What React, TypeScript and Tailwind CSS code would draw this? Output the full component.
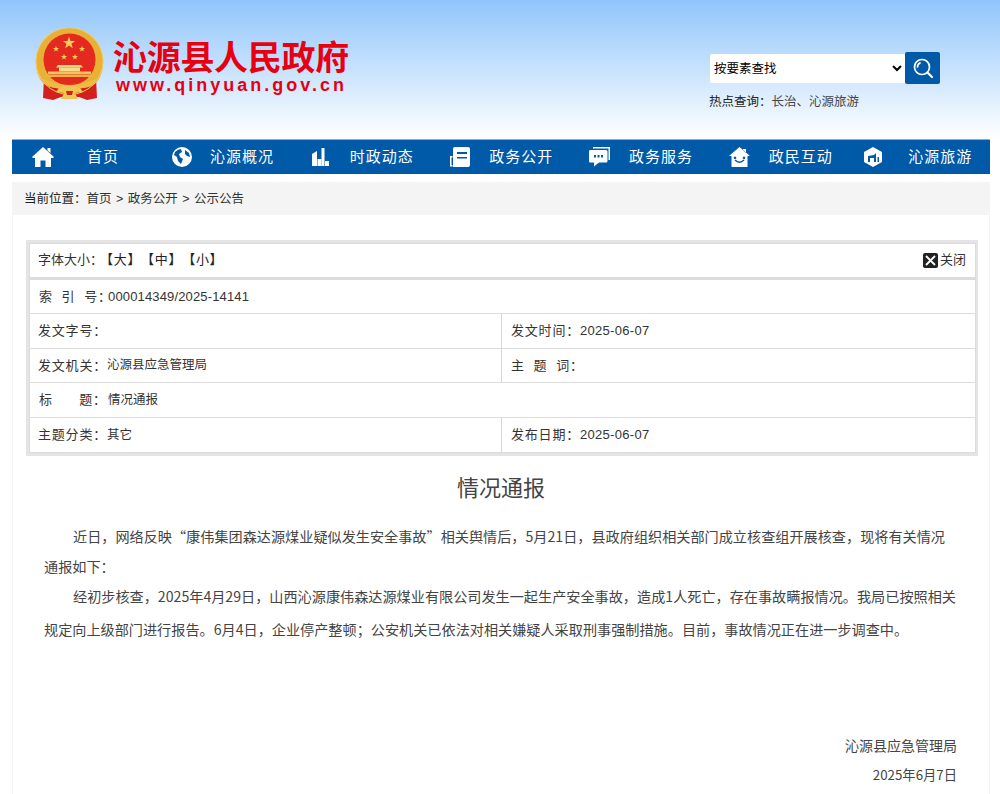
import { ReactNode } from 'react';

const SANS = "font-['Liberation_Sans','Noto_Sans_CJK_SC',sans-serif]";
const CJK = "font-['Noto_Sans_CJK_SC',sans-serif]";

function Star({ x, y, r }: { x: number; y: number; r: number }) {
  const pts: string[] = [];
  for (let i = 0; i < 10; i++) {
    const rad = i % 2 === 0 ? r : r * 0.4;
    const a = (Math.PI / 5) * i - Math.PI / 2;
    pts.push(`${(x + rad * Math.cos(a)).toFixed(2)},${(y + rad * Math.sin(a)).toFixed(2)}`);
  }
  return <polygon points={pts.join(' ')} fill="#f3cf5a" />;
}

function Emblem() {
  return (
    <svg width="70" height="74" viewBox="0 0 70 74">
      {/* ribbons */}
      <path d="M9 50 L8 70 L18 72 L26 69 L44 69 L52 72 L62 70 L61 50 Z" fill="#d4201c" />
      {/* ring */}
      <path d="M34.500 0 A34.500 34.500 0 0 1 64 51 Q60 58 50 60 H19 Q9 58 5 51 A34.500 34.500 0 0 1 34.500 0 Z" fill="#e8b136" />
      <circle cx="34.500" cy="33" r="33.500" fill="none" stroke="#f2cd62" strokeWidth="1" />
      <circle cx="34.500" cy="31.500" r="26" fill="#e42a1f" />
      <Star x={34} y={15} r={6.500} />
      <Star x={21} y={21} r={3.200} />
      <Star x={47} y={21} r={3.200} />
      <Star x={29} y={29} r={3.200} />
      <Star x={40} y={29} r={3.200} />
      {/* gate */}
      <path d="M23 37 H46 L48 39.500 H21 Z" fill="#f3d57c" />
      <rect x="24" y="39.500" width="21" height="4" fill="#f6dc8e" />
      <rect x="13" y="43.500" width="43" height="3" fill="#f0c65a" />
      <rect x="10" y="47" width="49" height="2" fill="#e9b53c" />
      {/* bottom garland */}
      <path d="M6 50 Q34 64 63 50 L60 56 Q34 67 9 56 Z" fill="#eebc44" />
      <path d="M24 60 Q34 54 45 60 L48 64 L40 65 L43 71 H26 L29 65 L21 64 Z" fill="#f0c552" />
      <path d="M31 63 H38 L37 67 H32 Z" fill="#d4201c" />
    </svg>
  );
}

function HomeIcon() {
  return (
    <svg width="22" height="20" viewBox="0 0 22 20" fill="#fff">
      <path d="M11 0 L22 10 L21 11 H19 V20 H13.500 V13.500 H8.500 V20 H3 V11 H1 L0 10 Z" />
      <path d="M15.500 1 H18.500 V6 L15.500 3.500 Z" />
    </svg>
  );
}

function GlobeIcon() {
  return (
    <svg width="20" height="20" viewBox="0 0 20 20">
      <circle cx="10" cy="10" r="10" fill="#fff" />
      <path d="M3 5 Q6 2 9 2 L10 5 L7 7 L8 10 L11 12 L9 17 L6 14 L5 10 L2 8 Z" fill="#005aa7" />
      <path d="M13 3 L17 6 L18 10 L15 9 L13 7 Z" fill="#005aa7" />
    </svg>
  );
}

function ChartIcon() {
  return (
    <svg width="17" height="18" viewBox="0 0 17 18" fill="#fff">
      <path d="M0 6 L5 3 V18 H0 Z" />
      <rect x="5.500" y="11" width="4" height="7" />
      <rect x="9.500" y="0" width="3" height="18" />
      <rect x="13" y="13" width="4" height="5" />
    </svg>
  );
}

function NewsIcon() {
  return (
    <svg width="20" height="20" viewBox="0 0 20 20" fill="#fff">
      <path d="M3 2 Q3 0 5 0 H18 Q20 0 20 2 V18 Q20 20 18 20 H3 Z M7 5 V7 H17 V5 Z M7 10 V11.500 H17 V10 Z" fillRule="evenodd" />
      <path d="M0 9 H2.500 V10.500 H1.500 V18 H2.500 V19.500 H0 Z" />
    </svg>
  );
}

function ChatIcon() {
  return (
    <svg width="21" height="20" viewBox="0 0 21 20" fill="#fff">
      <path d="M4 0 H21 V13 H19.500 V1.500 H4 Z" />
      <path d="M1 3 H17 Q18.500 3 18.500 4.500 V14 Q18.500 15.500 17 15.500 H10 L5 19.500 V15.500 H1 Q0 15.500 0 14 V4.500 Q0 3 1 3 Z M5 8 V10.500 H7 V8 Z M8.500 8 V10.500 H10.500 V8 Z M12 8 V10.500 H14 V8 Z" fillRule="evenodd" />
    </svg>
  );
}

function SmileHomeIcon() {
  return (
    <svg width="21" height="20" viewBox="0 0 21 20" fill="#fff">
      <path d="M10.500 0 L21 9 H18.500 V20 H2.500 V9 H0 Z M14 2 H17 V6 L14 3.500 Z M6 9.500 A1.300 1.300 0 1 0 6.010 9.500 Z M15 9.500 A1.300 1.300 0 1 0 15.010 9.500 Z" fillRule="evenodd" />
      <path d="M6 13 Q10.500 17.500 15 13" fill="none" stroke="#005aa7" strokeWidth="1.400" />
    </svg>
  );
}

function CubeIcon() {
  return (
    <svg width="18" height="20" viewBox="0 0 18 20" fill="#fff">
      <path d="M9 0 L18 5 V15 L9 20 L0 15 V5 Z M4 9 V15 H6 V11 H10 V15 H12 V6 L10 8 Z M13.500 10 V15 H15 V10 Z" fillRule="evenodd" />
    </svg>
  );
}

const NAV: { label: string; icon: ReactNode; iconBox: string; text: string }[] = [
  { label: '首页', icon: <HomeIcon />, iconBox: 'w-[62px]', text: 'ml-[13px]' },
  { label: '沁源概况', icon: <GlobeIcon />, iconBox: 'w-[60px]', text: 'ml-[-2px]' },
  { label: '时政动态', icon: <ChartIcon />, iconBox: 'w-[58px]', text: 'ml-0' },
  { label: '政务公开', icon: <NewsIcon />, iconBox: 'w-[58px]', text: 'ml-0' },
  { label: '政务服务', icon: <ChatIcon />, iconBox: 'w-[58px]', text: 'ml-0' },
  { label: '政民互动', icon: <SmileHomeIcon />, iconBox: 'w-[57px]', text: 'ml-[1px]' },
  { label: '沁源旅游', icon: <CubeIcon />, iconBox: 'w-[46px]', text: 'ml-[12px]' },
];

function Cell({ label, value, wide, valueClass }: { label: ReactNode; value?: string; wide?: boolean; valueClass?: string }) {
  return (
    <div className={`flex items-center h-full ${wide ? 'w-[472px] border-r border-[#d8d8d8] pl-[8px]' : 'flex-1 pl-[9px]'}`}>
      <span className="inline-block w-[69px] text-[13px] tracking-[0.8px] whitespace-pre">{label}</span>
      {value && <span className={valueClass ?? 'text-[12.5px]'}>{value}</span>}
    </div>
  );
}

const DATE = 'text-[13px] tracking-[0.300px]';

export default function App() {
  return (
    <div className={`${SANS} h-[794px] overflow-hidden bg-white text-[#333]`}>
      {/* header */}
      <header className="flex h-[139px] justify-between bg-gradient-to-b from-[#90c5fa] to-white">
        <div className="ml-[35px] mt-[28px] flex items-start">
          <Emblem />
          <div className="ml-[8px] mt-[10px]">
            <div className="text-[34px] leading-[40px] font-bold tracking-[-0.300px] whitespace-nowrap text-[#e60012]">沁源县人民政府</div>
            <div className="-mt-[3px] ml-[3px] text-[18px] leading-[20px] font-bold tracking-[3px] text-[#e60012]">www.qinyuan.gov.cn</div>
          </div>
        </div>
        <div className="mr-[60px] mt-[52px] w-[230px]">
          <div className="flex items-center">
            <select className="h-[29px] w-[195px] rounded-l-[2px] bg-white pt-[2px] text-[12.500px] text-black outline-none">
              <option>按要素查找</option>
            </select>
            <button className="flex h-[32px] w-[35px] items-center justify-center rounded-[2px] bg-[#005aa7]">
              <svg width="22" height="22" viewBox="0 0 22 22" fill="none" stroke="#fff" strokeWidth="1.700" strokeLinecap="round">
                <circle cx="10" cy="10" r="7.500" />
                <path d="M5.500 10 A4.500 4.500 0 0 1 8 6" />
                <path d="M15.500 15.500 L20 20" strokeWidth="2.200" />
              </svg>
            </button>
          </div>
          <div className="mt-[10px] -ml-[1px] text-[12.500px] leading-[16px]">
            <span className="text-[#222]">热点查询：</span>
            <span className="text-[#444]">长治、沁源旅游</span>
          </div>
        </div>
      </header>

      <div className="mx-[12px] w-[978px]">
        {/* nav */}
        <nav className="flex h-[35px] border-t border-[#7fb2dc] bg-[#005aa7] text-white">
          {NAV.map((item) => (
            <div key={item.label} className={`flex items-center ${item.label === '首页' ? 'w-[140px]' : 'w-[139.660px]'}`}>
              <div className={`${item.iconBox} flex justify-center`}>{item.icon}</div>
              <span className={`${item.text} text-[15px] leading-[34px] tracking-[1px] whitespace-nowrap`}>{item.label}</span>
            </div>
          ))}
        </nav>

        {/* breadcrumb */}
        <div className="mt-[8px] flex h-[33px] items-center bg-[#f4f4f4] pl-[12px] pt-[1px] text-[12.500px] text-[#333]">
          <span className="text-[#222]">当前位置：</span>
          <span className="whitespace-pre [word-spacing:1px]">首页 &gt; 政务公开 &gt; 公示公告</span>
        </div>

        {/* content */}
        <div className="h-[600px] border-x border-[#f4f4f4] pt-[25px]">
          <div className="ml-[13px] mr-[11px] border-[3px] border-r-2 border-[#e4e4e4] text-[#333]">
            <div className="flex h-[35px] items-center justify-between border border-[#dcdcdc] pb-[1px] pl-[8px] pr-[9px] text-[13px]">
              <div className="flex">
                <span>字体大小：</span>
                <span className="-ml-[3px] tracking-[0.700px] text-[#222] [text-spacing-trim:space-all]">【大】【中】【小】</span>
              </div>
              <div className="flex items-center gap-[2px] text-[13px]">
                <span className="flex h-[15px] w-[15px] items-center justify-center rounded-[2px] bg-[#222]">
                  <svg width="11" height="11" viewBox="0 0 11 11" stroke="#fff" strokeWidth="1.800">
                    <path d="M1 1 L10 10 M10 1 L1 10" />
                  </svg>
                </span>
                关闭
              </div>
            </div>
            <div className="flex h-[36px] items-center border-x border-t-2 border-b border-[#dcdcdc]">
              <Cell label="索  引  号：" value="000014349/2025-14141" valueClass="text-[13px] tracking-[0.150px]" />
            </div>
            <div className="flex h-[35px] items-center border-x border-b border-[#dcdcdc]">
              <Cell label="发文字号：" wide />
              <Cell label="发文时间：" value="2025-06-07" valueClass={DATE} />
            </div>
            <div className="flex h-[34px] items-center border-x border-b border-[#dcdcdc]">
              <Cell label="发文机关：" value="沁源县应急管理局" wide />
              <Cell label="主  题  词：" />
            </div>
            <div className="flex h-[35px] items-center border-x border-b border-[#dcdcdc]">
              <Cell label="标      题：" value="情况通报" />
            </div>
            <div className="flex h-[35px] items-center border-x border-b border-[#dcdcdc]">
              <Cell label="主题分类：" value="其它" wide />
              <Cell label="发布日期：" value="2025-06-07" valueClass={DATE} />
            </div>
          </div>

          <h1 className={`${CJK} mt-[14px] text-center text-[22px] leading-[32px] font-normal text-[#444]`}>情况通报</h1>

          <div className={`${CJK} mt-[19px] pl-[31px] pr-[31px] text-[14.150px] leading-[30px] text-[#444] [text-spacing-trim:space-all]`}>
            <p className="indent-[29px]">
              近日，网络反映“康伟集团森达源煤业疑似发生安全事故”相关舆情后，5月21日，县政府组织相关部门成立核查组开展核查，现将有关情况通报如下：
            </p>
            <p className="-mt-[1px] indent-[29px] leading-[33px]">
              经初步核查，2025年4月29日，山西沁源康伟森达源煤业有限公司发生一起生产安全事故，造成1人死亡，存在事故瞒报情况。我局已按照相关规定向上级部门进行报告。6月4日，企业停产整顿；公安机关已依法对相关嫌疑人采取刑事强制措施。目前，事故情况正在进一步调查中。
            </p>
            <div className="mt-[84px] pr-[1px] text-right text-[14px]">
              <p>沁源县应急管理局</p>
              <p className="text-[13.300px]">2025年6月7日</p>
            </div>
          </div>
        </div>
      </div>
    </div>
  );
}
